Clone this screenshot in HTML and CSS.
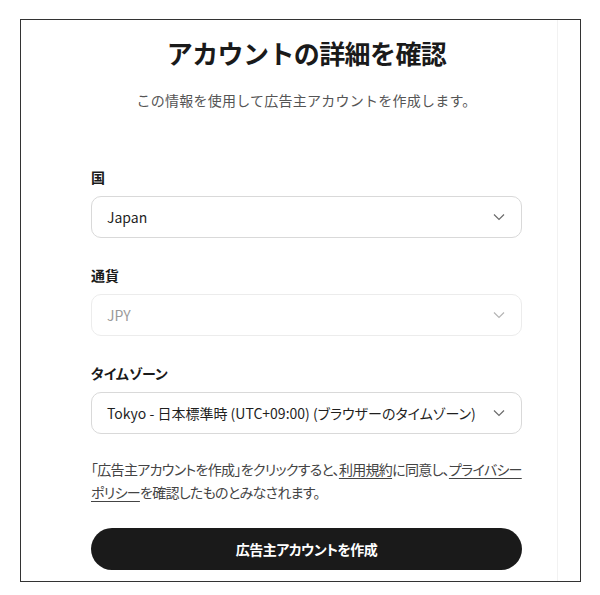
FILE: index.html
```html
<!DOCTYPE html>
<html lang="ja">
<head>
<meta charset="utf-8">
<link rel="stylesheet" href="styles.css">
</head>
<body>
<div class="frame">
  <div class="scroll">
    <div class="content">
      <h1 class="title">アカウントの詳細を確認</h1>
      <p class="subtitle">この情報を使用して広告主アカウントを作成します。</p>
      <div class="fields">
        <div class="field">
          <div class="label">国</div>
          <div class="select">
            <span class="value">Japan</span>
            <svg class="chev" width="12" height="8" viewBox="0 0 12 8"><path d="M1 1.5 L6 6.5 L11 1.5" fill="none" stroke="#6b6b6b" stroke-width="1.2"/></svg>
          </div>
        </div>
        <div class="field">
          <div class="label">通貨</div>
          <div class="select disabled">
            <span class="value">JPY</span>
            <svg class="chev" width="12" height="8" viewBox="0 0 12 8"><path d="M1 1.5 L6 6.5 L11 1.5" fill="none" stroke="#b5b5b5" stroke-width="1.2"/></svg>
          </div>
        </div>
        <div class="field">
          <div class="label">タイムゾーン</div>
          <div class="select">
            <span class="value">Tokyo - 日本標準時 (UTC+09:00) (ブラウザーのタイムゾーン)</span>
            <svg class="chev" width="12" height="8" viewBox="0 0 12 8"><path d="M1 1.5 L6 6.5 L11 1.5" fill="none" stroke="#6b6b6b" stroke-width="1.2"/></svg>
          </div>
        </div>
      </div>
      <p class="terms">｢広告主アカウントを作成｣をクリックすると、<a class="link" href="#">利用規約</a>に同意し、<a class="link" href="#"><span class="nowrap">プライバシー</span><br>ポリシー</a>を確認したものとみなされます。</p>
      <button class="cta">広告主アカウントを作成</button>
    </div>
  </div>
</div>
</body>
</html>
```
FILE: styles.css
```css
html, body {
  margin: 0;
  padding: 0;
  background: #ffffff;
}
body {
  font-family: "Noto Sans CJK JP", "Noto Sans", sans-serif;
  color: #1a1a1a;
}
.frame {
  margin: 19px 0 0 20px;
  width: 561px;
  height: 563px;
  box-sizing: border-box;
  border: 1px solid #333333;
  overflow: hidden;
}
.scroll {
  width: 536px;
  height: 100%;
  border-right: 1px solid #f2f2f2;
}
.content {
  width: 431px;
  margin-left: 70px;
  display: flex;
  flex-direction: column;
}
.title {
  margin: 14px 0 0;
  font-size: 26px;
  line-height: 38px;
  font-weight: 700;
  text-align: center;
  color: #1a1a1a;
  letter-spacing: -0.6px;
}
.subtitle {
  margin: 17px 0 0;
  font-size: 14px;
  line-height: 22px;
  text-align: center;
  color: #555555;
  letter-spacing: 0.25px;
}
.fields {
  margin-top: 55px;
  display: flex;
  flex-direction: column;
  gap: 26px;
}
.field {
  display: flex;
  flex-direction: column;
  gap: 8px;
}
.label {
  font-size: 14px;
  line-height: 22px;
  font-weight: 700;
  color: #1a1a1a;
  font-feature-settings: "palt";
}
.select {
  height: 42px;
  box-sizing: border-box;
  border: 1px solid #d9d9d9;
  border-radius: 10px;
  padding: 0 16px 0 15px;
  display: flex;
  align-items: center;
  justify-content: space-between;
}
.select .value {
  font-size: 14px;
  color: #1f1f1f;
  white-space: nowrap;
  font-feature-settings: "palt";
}
.select.disabled {
  border-color: #ececec;
}
.select.disabled .value {
  color: #9a9a9a;
}
.chev {
  flex: none;
}
.terms {
  margin: 24px 0 0;
  font-size: 14px;
  line-height: 23px;
  color: #444444;
  font-feature-settings: "palt";
  letter-spacing: -0.7px;
}
.nowrap {
  white-space: nowrap;
}
.link {
  color: #444444;
  text-decoration: underline;
  text-underline-offset: 3px;
}
.cta {
  margin-top: 24px;
  height: 42px;
  border: none;
  border-radius: 21px;
  background: #1a1a1a;
  color: #ffffff;
  font-family: "Noto Sans CJK JP", sans-serif;
  font-size: 14px;
  font-weight: 700;
  letter-spacing: -0.5px;
  font-feature-settings: "palt";
}
```
